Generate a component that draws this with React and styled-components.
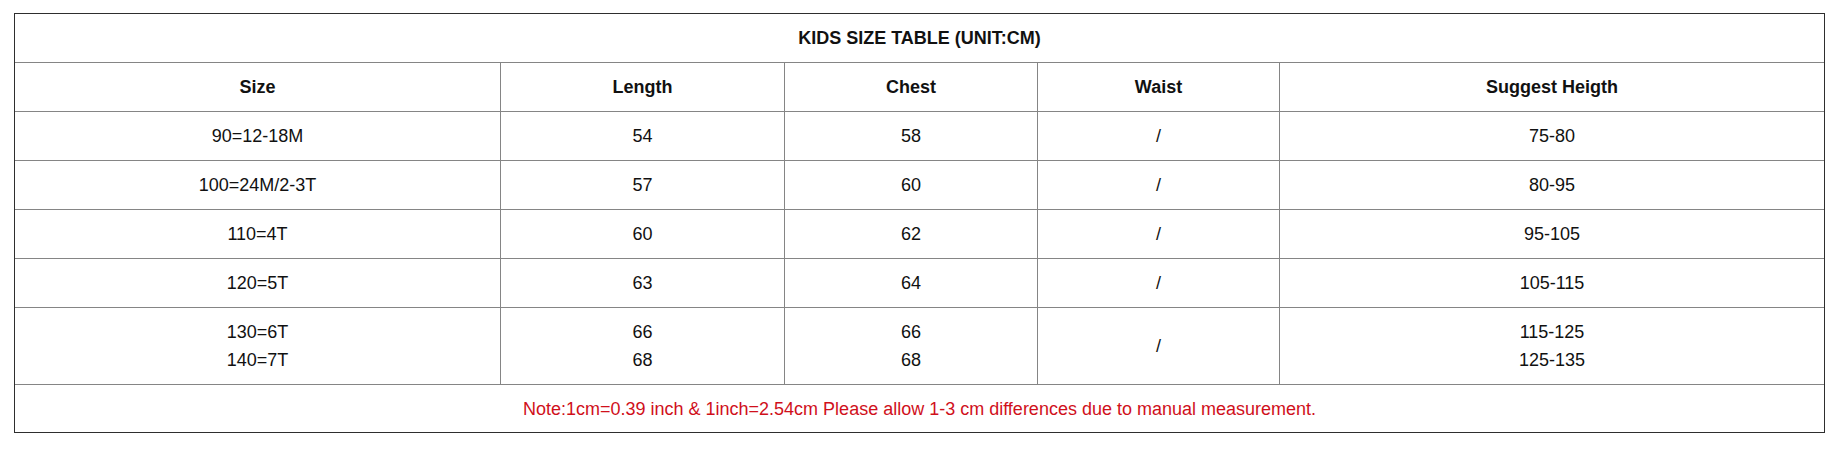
import React from 'react'
import styled, { createGlobalStyle } from 'styled-components'

const GlobalStyle = createGlobalStyle`
    body {
        margin: 0;
        background: #ffffff;
        font-family: "Liberation Sans", Arial, sans-serif;
    }
`

const Page = styled.div`
    padding: 13px 0 0 14px;
`

const SizeGrid = styled.div`
    display: grid;
    width: 1811px;
    box-sizing: border-box;
    grid-template-columns: 485px 283px 252px 241px 544px;
    grid-template-rows: 48px 48px 48px 48px 48px 48px 76px 47px;
    gap: 1px;
    background: #858585;
    border: 1px solid #2e2e2e;
`

const Cell = styled.div`
    display: flex;
    flex-direction: column;
    align-items: center;
    justify-content: center;
    background: #ffffff;
    color: #111111;
    font-size: 18px;
    line-height: 28px;
    font-weight: ${(p) => (p.$bold ? 'bold' : 'normal')};
    grid-column: ${(p) => (p.$full ? '1 / -1' : 'auto')};
`

const Note = styled(Cell)`
    color: #d0101b;
`

const columns = ['Size', 'Length', 'Chest', 'Waist', 'Suggest Heigth']

const rows = [
    [['90=12-18M'], ['54'], ['58'], ['/'], ['75-80']],
    [['100=24M/2-3T'], ['57'], ['60'], ['/'], ['80-95']],
    [['110=4T'], ['60'], ['62'], ['/'], ['95-105']],
    [['120=5T'], ['63'], ['64'], ['/'], ['105-115']],
    [['130=6T', '140=7T'], ['66', '68'], ['66', '68'], ['/'], ['115-125', '125-135']],
]

function App() {
    return (
        <Page>
            <GlobalStyle />
            <SizeGrid>
                <Cell $full $bold>KIDS SIZE TABLE (UNIT:CM)</Cell>
                {columns.map((c) => (
                    <Cell key={c} $bold>{c}</Cell>
                ))}
                {rows.map((row, i) =>
                    row.map((lines, j) => (
                        <Cell key={i + '-' + j}>
                            {lines.map((t) => (
                                <span key={t}>{t}</span>
                            ))}
                        </Cell>
                    ))
                )}
                <Note $full>
                    Note:1cm=0.39 inch &amp; 1inch=2.54cm Please allow 1-3 cm differences due to manual measurement.
                </Note>
            </SizeGrid>
        </Page>
    )
}

export default App
